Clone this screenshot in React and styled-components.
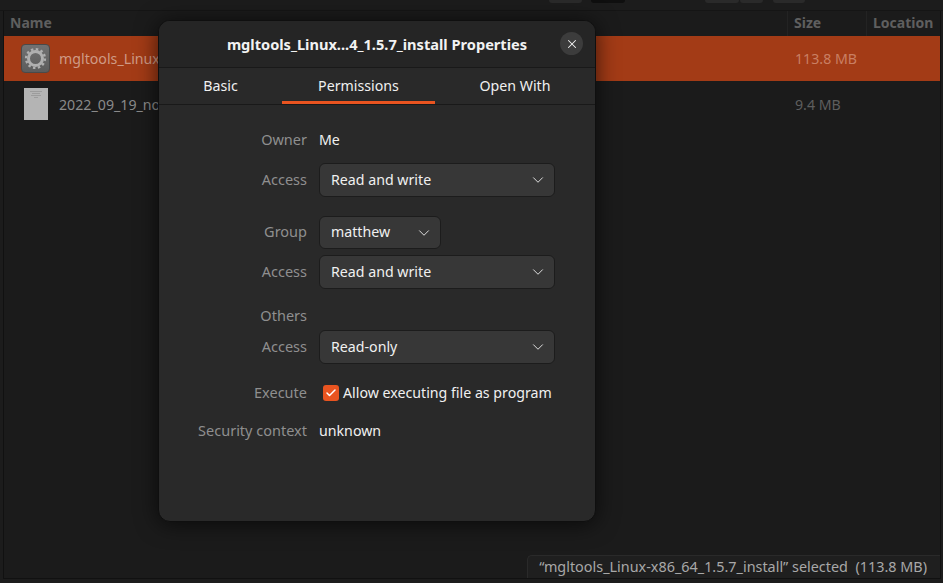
import React from 'react';
import styled, { createGlobalStyle } from 'styled-components';
import { ChevronDown, X, Check } from 'lucide-react';

const Global = createGlobalStyle`
  html, body {
    margin: 0;
    padding: 0;
    background: #1c1c1c;
  }
  body {
    font-family: "Noto Sans", "Open Sans", sans-serif;
    font-size: 14.2px;
    overflow: hidden;
  }
`;

const Page = styled.div`
  position: relative;
  width: 943px;
  height: 583px;
  display: flex;
  flex-direction: column;
  overflow: hidden;
  background: #1c1c1c;
`;

const Toolbar = styled.div`
  height: 10px;
  flex-shrink: 0;
  display: flex;
  background: #1c1c1c;
  border-bottom: 1px solid #151515;
  padding-left: 549px;
`;

const ToolButton = styled.div`
  width: ${p => p.$w}px;
  height: 3px;
  margin-right: ${p => p.$gap}px;
  background: ${p => (p.$dark ? '#0f0f0f' : '#2a2a2a')};
  border-radius: 0 0 4px 4px;
`;

const FileView = styled.div`
  flex: 1;
  display: flex;
  flex-direction: column;
  margin: 0 2px 4px 3px;
  background: #1b1b1b;
  border-left: 1px solid #111;
  border-right: 1px solid #111;
  border-bottom: 1px solid #111;
  position: relative;
`;

const HeaderRow = styled.div`
  height: 25px;
  display: flex;
  color: #5f5f5f;
  font-weight: 700;
  font-size: 14px;
`;

const HeaderCell = styled.div`
  width: ${p => p.$w || 'auto'};
  flex: ${p => (p.$grow ? 1 : 'none')};
  box-sizing: border-box;
  padding: 0 0 3px ${p => p.$pad}px;
  display: flex;
  align-items: center;
  border-left: ${p => (p.$sep ? '1px solid #232323' : '0')};
`;

const FileRow = styled.div`
  height: 45px;
  display: flex;
  align-items: center;
  background: ${p => (p.$selected ? '#a33b16' : 'transparent')};
  color: ${p => (p.$selected ? '#cf9a85' : '#8a8a8a')};
`;

const IconSlot = styled.div`
  width: 55px;
  display: flex;
  justify-content: center;
  padding-left: 9px;
  padding-right: 1px;
  box-sizing: border-box;
`;

const FileName = styled.div`
  flex: 1;
  padding: ${p => (p.$selected ? '0 0 1px' : '1px 0 0')};
`;

const FileSize = styled.div`
  width: 145px;
  padding: ${p => (p.$selected ? '0 0 1px' : '1px 0 0')};
  color: ${p => (p.$selected ? '#c97f63' : '#5e5e5e')};
`;

const ExecIcon = styled.div`
  width: 29px;
  height: 29px;
  box-sizing: border-box;
  border-radius: 4px;
  background: linear-gradient(#727272, #5c5c5c);
  border: 1px solid #4a4a4a;
  display: flex;
  align-items: center;
  justify-content: center;
`;

const DocThumb = styled.div`
  width: 24px;
  height: 32px;
  background: #b4b4b4;
  display: flex;
  flex-direction: column;
  align-items: center;
  gap: 1px;
  padding-top: 3px;
  box-sizing: border-box;
`;

const DocLine = styled.div`
  width: ${p => p.$w}px;
  height: 1px;
  background: #9c9c9c;
`;

const StatusBar = styled.div`
  position: absolute;
  right: 0;
  bottom: 0;
  height: 23px;
  box-sizing: border-box;
  padding: 0 13px 2px 11px;
  display: flex;
  align-items: center;
  background: #1f1f1f;
  border: 1px solid #2a2a2a;
  border-right: 0;
  border-bottom: 0;
  border-radius: 5px 0 0 0;
  color: #a8a8a8;
  font-size: 14.4px;
  white-space: pre;
`;

const Dialog = styled.div`
  position: absolute;
  left: 158px;
  top: 20px;
  width: 438px;
  height: 502px;
  box-sizing: border-box;
  background: #292929;
  border: 1px solid #0f0f0f;
  border-radius: 12px;
  box-shadow: 0 2px 22px rgba(0, 0, 0, 0.65);
  display: flex;
  flex-direction: column;
`;

const TitleBar = styled.div`
  height: 47px;
  box-sizing: border-box;
  display: flex;
  align-items: center;
  justify-content: center;
  background: #252525;
  border-bottom: 1px solid #191919;
  border-radius: 11px 11px 0 0;
  position: relative;
  color: #f2f2f2;
  font-size: 14.6px;
  font-weight: 700;
`;

const CloseButton = styled.div`
  position: absolute;
  right: 12px;
  top: 11px;
  width: 23px;
  height: 23px;
  border-radius: 50%;
  background: #3c3c3c;
  display: flex;
  align-items: center;
  justify-content: center;
  color: #f2f2f2;
`;

const Tabs = styled.div`
  height: 37px;
  box-sizing: border-box;
  display: flex;
  background: #292929;
  border-bottom: 1px solid #191919;
`;

const Tab = styled.div`
  width: ${p => p.$w}px;
  display: flex;
  align-items: center;
  justify-content: center;
  color: #f0f0f0;
  box-sizing: border-box;
  border-bottom: 3px solid ${p => (p.$active ? '#e95420' : 'transparent')};
  padding-top: 2px;
`;

const Form = styled.div`
  display: grid;
  grid-template-columns: 148px 236px;
  column-gap: 12px;
  align-items: center;
  padding-top: 24px;
`;

const Label = styled.div`
  text-align: right;
  color: #8f8f8f;
  font-size: 14.5px;
  height: ${p => p.$h}px;
  margin-top: ${p => p.$mt || 0}px;
  line-height: ${p => p.$h - 2}px;
`;

const Value = styled.div`
  color: #f0f0f0;
  height: ${p => p.$h}px;
  line-height: ${p => p.$h}px;
  margin-top: ${p => p.$mt || 0}px;
`;

const Select = styled.div`
  width: ${p => p.$w || 236}px;
  height: ${p => p.$h || 34}px;
  margin-top: ${p => p.$mt || 0}px;
  box-sizing: border-box;
  padding: 0 7px 0 11px;
  display: flex;
  align-items: center;
  justify-content: space-between;
  background: #373737;
  border: 1px solid #1c1c1c;
  border-radius: 6px;
  color: #f0f0f0;
`;

const SelectText = styled.span`
  padding-bottom: 2px;
`;

const CheckRow = styled.div`
  display: flex;
  align-items: center;
  gap: 4px;
  margin-top: ${p => p.$mt}px;
  margin-left: 4px;
  height: 22px;
  color: #f0f0f0;
  white-space: nowrap;
`;

const CheckLabel = styled.span`
  padding-bottom: 2px;
`;

const CheckBox = styled.div`
  width: 16px;
  height: 16px;
  border-radius: 3px;
  background: #e95420;
  display: flex;
  align-items: center;
  justify-content: center;
  color: #fff;
`;

function AccessSelect({ children, ...rest }) {
  return (
    <Select {...rest}>
      <SelectText>{children}</SelectText>
      <ChevronDown size={18} strokeWidth={1.3} color="#e0e0e0" />
    </Select>
  );
}

// ring plus a dashed outer ring for the teeth
function GearIcon() {
  return (
    <svg width="23" height="23" viewBox="0 0 23 23" fill="none" stroke="#b0b0b0">
      <circle cx="11.5" cy="11.5" r="7" strokeWidth="3" />
      <circle cx="11.5" cy="11.5" r="9.4" strokeWidth="2.4" strokeDasharray="2.46 2.46" />
    </svg>
  );
}

export default function App() {
  return (
    <Page>
      <Global />
      <Toolbar>
        <ToolButton $w={33} $gap={9} />
        <ToolButton $w={34} $gap={80} $dark />
        <ToolButton $w={34} $gap={1} />
        <ToolButton $w={23} $gap={10} />
        <ToolButton $w={32} $gap={0} />
      </Toolbar>
      <FileView>
        <HeaderRow>
          <HeaderCell $grow $pad={6}>Name</HeaderCell>
          <HeaderCell $w="79px" $pad={6} $sep>Size</HeaderCell>
          <HeaderCell $w="74px" $pad={6} $sep>Location</HeaderCell>
        </HeaderRow>
        <FileRow $selected>
          <IconSlot><ExecIcon><GearIcon /></ExecIcon></IconSlot>
          <FileName $selected>mgltools_Linux-x86_64_1.5.7_install</FileName>
          <FileSize $selected>113.8 MB</FileSize>
        </FileRow>
        <FileRow>
          <IconSlot>
            <DocThumb>
              <DocLine $w={12} />
              <DocLine $w={8} />
              <DocLine $w={10} />
              <DocLine $w={4} />
            </DocThumb>
          </IconSlot>
          <FileName>2022_09_19_notes.pdf</FileName>
          <FileSize>9.4 MB</FileSize>
        </FileRow>
        <StatusBar>“mgltools_Linux-x86_64_1.5.7_install” selected  (113.8 MB)</StatusBar>
      </FileView>
      <Dialog>
        <TitleBar>
          mgltools_Linux...4_1.5.7_install Properties
          <CloseButton><X size={14} strokeWidth={1.8} /></CloseButton>
        </TitleBar>
        <Tabs>
          <Tab $w={123}>Basic</Tab>
          <Tab $w={153} $active>Permissions</Tab>
          <Tab $w={160}>Open With</Tab>
        </Tabs>
        <Form>
          <Label $h={22}>Owner</Label>
          <Value $h={22}>Me</Value>
          <Label $h={34} $mt={12}>Access</Label>
          <AccessSelect $mt={12}>Read and write</AccessSelect>
          <Label $h={33} $mt={19}>Group</Label>
          <AccessSelect $w={122} $h={33} $mt={19}>matthew</AccessSelect>
          <Label $h={34} $mt={6}>Access</Label>
          <AccessSelect $mt={6}>Read and write</AccessSelect>
          <Label $h={22} $mt={16}>Others</Label>
          <div />
          <Label $h={34} $mt={3}>Access</Label>
          <AccessSelect $mt={3}>Read-only</AccessSelect>
          <Label $h={22} $mt={18}>Execute</Label>
          <CheckRow $mt={18}>
            <CheckBox><Check size={12} strokeWidth={3} /></CheckBox>
            <CheckLabel>Allow executing file as program</CheckLabel>
          </CheckRow>
          <Label $h={22} $mt={16}>Security context</Label>
          <Value $h={22} $mt={16}>unknown</Value>
        </Form>
      </Dialog>
    </Page>
  );
}
